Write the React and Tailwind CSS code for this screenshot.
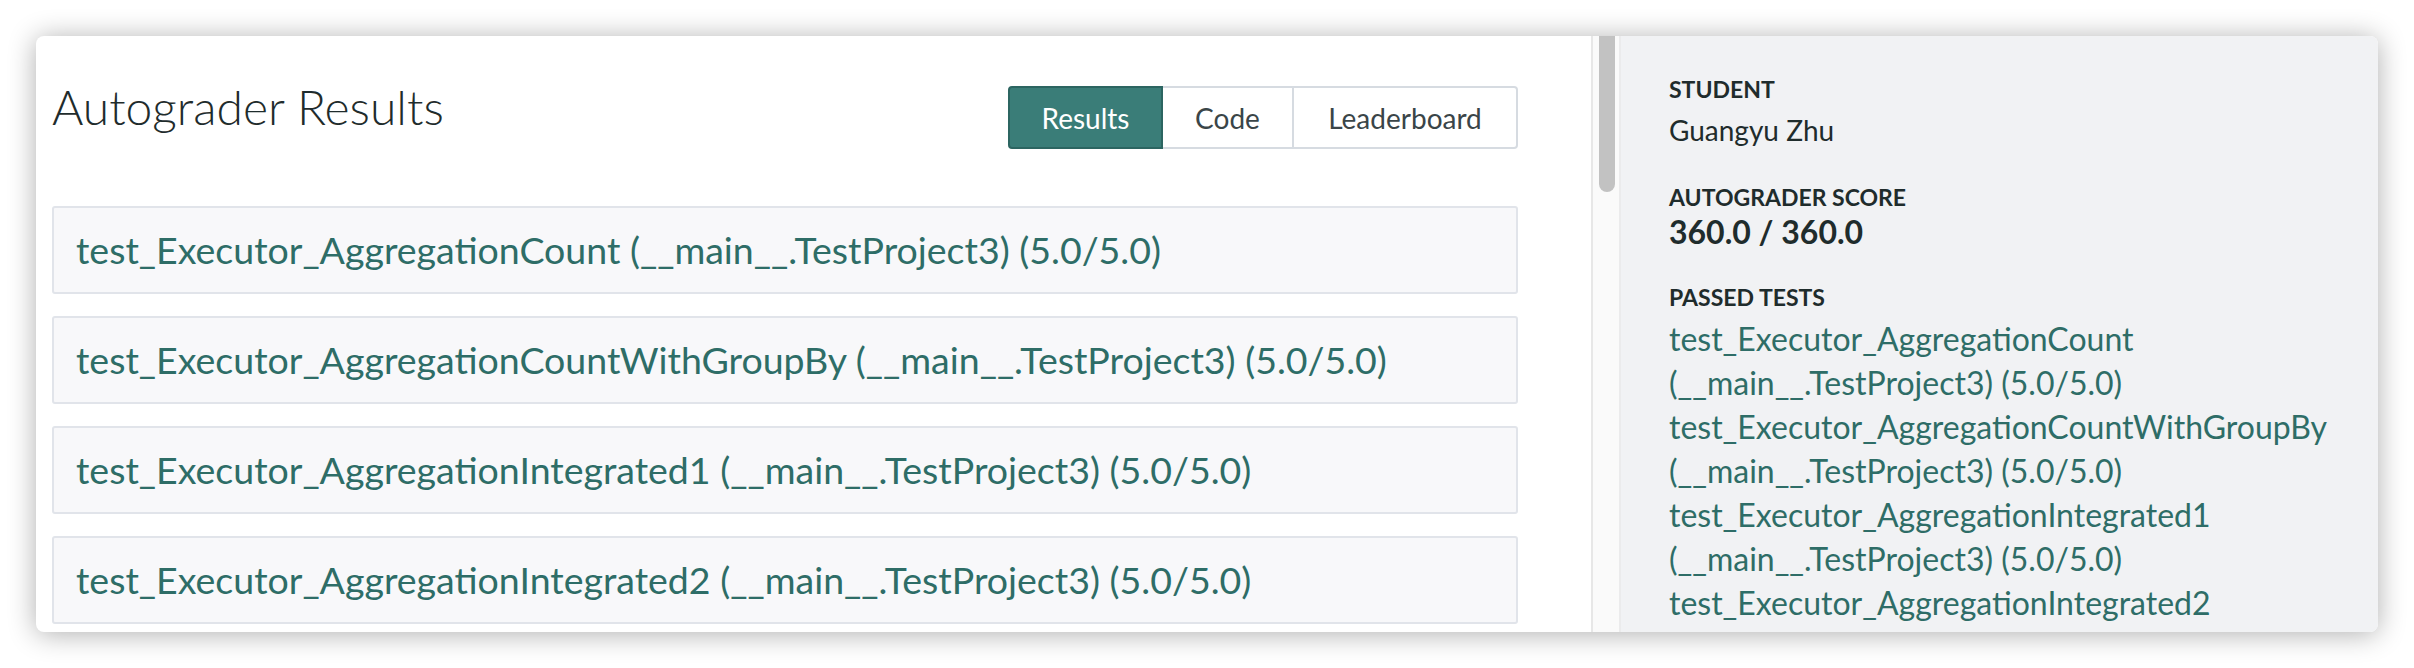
import React from 'react';

const tests = [
    'test_Executor_AggregationCount',
    'test_Executor_AggregationCountWithGroupBy',
    'test_Executor_AggregationIntegrated1',
    'test_Executor_AggregationIntegrated2',
];

const suffix = '(__main__.TestProject3) (5.0/5.0)';

const App = () => {
    return (
        <div className="w-[2414px] h-[668px] bg-white p-[36px] font-[Lato,sans-serif] overflow-hidden">
            <div className="flex h-[596px] rounded-[8px] overflow-hidden bg-white shadow-[0_2px_28px_rgba(0,0,0,0.32)]">
                {/* main column */}
                <div className="flex-1 min-w-0 pt-[50px] pl-[16px] pr-[73px] overflow-hidden">
                    <div className="flex items-start justify-between">
                        <h1 className="text-[48px] leading-[42px] font-light text-[#1f2c2c]">Autograder Results</h1>
                        <div className="flex h-[63px] text-[28px]">
                            <button className="w-[155px] h-full rounded-l-[4px] border-2 border-[#2c6561] bg-[#3a7d78] text-white">Results</button>
                            <button className="w-[131px] h-full border-y-2 border-r-2 border-[#d6dbe1] bg-white text-[#3a4548]">Code</button>
                            <button className="w-[224px] h-full rounded-r-[4px] border-y-2 border-r-2 border-[#d6dbe1] bg-white text-[#3a4548]">Leaderboard</button>
                        </div>
                    </div>
                    <div className="mt-[57px] flex flex-col gap-[22px]">
                        {tests.map((t) => (
                            <div key={t} className="h-[88px] shrink-0 flex items-center pl-[22px] border-2 border-[#e1e4ea] bg-[#f8f8fa] rounded-[3px]">
                                <span className="text-[37.5px] text-[#2e6d67] whitespace-nowrap">{t} {suffix}</span>
                            </div>
                        ))}
                    </div>
                </div>

                {/* scrollbar */}
                <div className="w-[30px] shrink-0 border-l-2 border-r-2 border-l-[#e7e7e7] border-r-[#ebebec] bg-[#fafafa]">
                    <div className="ml-[6px] w-[16px] h-[156px] rounded-b-full bg-[#c2c2c2]" />
                </div>

                {/* sidebar */}
                <div className="w-[757px] shrink-0 bg-[#f1f2f4] pt-[37px] pl-[48px] overflow-hidden">
                    <div className="text-[23px] leading-[32px] font-bold text-[#1f2c2c]">STUDENT</div>
                    <div className="mt-[5px] text-[28px] leading-[40px] text-[#1f2c2c]">Guangyu Zhu</div>

                    <div className="mt-[31px] text-[23px] leading-[32px] font-bold text-[#1f2c2c]">AUTOGRADER SCORE</div>
                    <div className="mt-[1px] text-[32px] leading-[36px] font-bold text-[#1f2c2c]">360.0 / 360.0</div>

                    <div className="mt-[31px] text-[23px] leading-[32px] font-bold text-[#1f2c2c]">PASSED TESTS</div>
                    <div className="mt-[4px] text-[32px] leading-[44px] text-[#2e6d67] w-[690px]">
                        {tests.map((t, i) => (
                            <div key={t}>
                                <div>{t}</div>
                                {i < tests.length - 1 && <div>{suffix}</div>}
                            </div>
                        ))}
                    </div>
                </div>
            </div>
        </div>
    );
};

export default App;
